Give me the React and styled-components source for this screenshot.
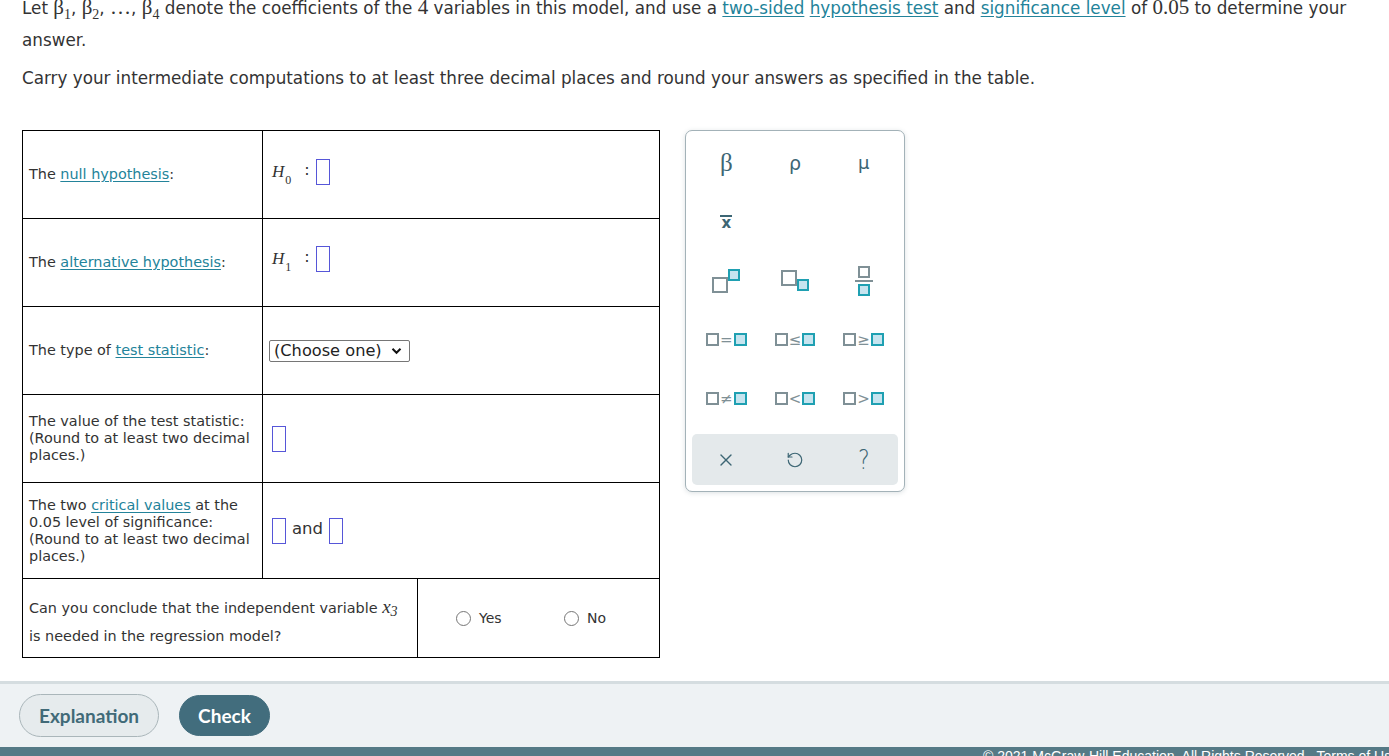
import React from 'react';
import styled, { createGlobalStyle } from 'styled-components';
import { X, RotateCcw } from 'lucide-react';

const Global = createGlobalStyle`
  html, body { margin: 0; padding: 0; background: #fff; overflow: hidden; }
  body { font-family: "DejaVu Sans", Verdana, sans-serif; color: #333; }
  * { box-sizing: border-box; }
`;

const Page = styled.div`
  width: 1389px;
  height: 756px;
  display: flex;
  flex-direction: column;
  overflow: hidden;
`;

const Main = styled.div`
  flex: 1;
  padding-left: 22px;
  overflow: hidden;
`;

const Para = styled.p`
  margin: ${(p) => p.$mt}px 0 0;
  font-size: 16.8px;
  line-height: 32px;
  color: #333;
  width: 1345px;
`;

const Link = styled.a`
  color: #23839a;
  text-decoration: underline;
  text-underline-offset: 2px;
  cursor: pointer;
`;

const MathText = styled.span`
  font-family: "Liberation Serif", "Times New Roman", serif;
  font-size: ${(p) => p.$size || 21}px;
  font-style: ${(p) => (p.$italic ? 'italic' : 'normal')};
  color: #333;
`;

const Sub = styled.sub`
  font-size: ${(p) => p.$size || 14}px;
  vertical-align: ${(p) => p.$drop || -5}px;
  line-height: 0;
`;

const Work = styled.div`
  display: flex;
  align-items: flex-start;
  gap: 25px;
  margin-top: 36px;
`;

const Table = styled.div`
  width: 638px;
  border: 1px solid #000;
  display: flex;
  flex-direction: column;
`;

const Row = styled.div`
  display: grid;
  grid-template-columns: ${(p) => p.$cols};
  height: ${(p) => p.$h}px;
  border-top: ${(p) => (p.$first ? 'none' : '1px solid #000')};
`;

const Label = styled.div`
  border-right: 1px solid #000;
  display: flex;
  align-items: center;
  padding: 0 6px;
  font-size: 14.4px;
  line-height: 17px;
  color: #333;
`;

const Question = styled.div`
  border-right: 1px solid #000;
  padding: 14px 6px 0;
  font-size: 14.4px;
  line-height: 28px;
  color: #333;
`;

const Answer = styled.div`
  display: flex;
  align-items: center;
  padding: 0 0 ${(p) => p.$pb || 0}px 9px;
  font-size: 16px;
  color: #333;
`;

const Blank = styled.span`
  display: inline-block;
  width: 14px;
  height: 26px;
  border: 1px solid #5656d8;
`;

const Hyp = styled.span`
  display: inline-flex;
  align-items: center;
  font-family: "Liberation Serif", serif;
  font-size: 17px;
`;

const HSub = styled.span`
  font-size: 12px;
  font-style: normal;
  position: relative;
  top: 9px;
  margin-left: 1px;
`;

const Colon = styled.span`
  font-family: "DejaVu Sans", sans-serif;
  font-size: 16px;
  margin: 0 6px 0 13px;
  position: relative;
  top: -2px;
`;

const Select = styled.div`
  display: inline-flex;
  align-items: center;
  gap: 9px;
  height: 22px;
  margin-left: -3px;
  padding: 0 7px 0 4px;
  border: 1px solid #767676;
  border-radius: 2px;
  font-size: 16.2px;
  color: #222;
  background: #fff;
`;

const AndText = styled.span`
  margin: 0 6px;
  font-size: 16.5px;
  position: relative;
  top: -2px;
`;

const Choices = styled.div`
  display: flex;
  align-items: center;
  padding-left: 38px;
  font-size: 14px;
  color: #333;
`;

const Choice = styled.label`
  display: inline-flex;
  align-items: center;
  gap: 8px;
  width: 108px;
`;

const Radio = styled.span`
  display: inline-block;
  width: 15px;
  height: 15px;
  border-radius: 50%;
  border: 1px solid #767676;
  background: #fff;
`;

const Keypad = styled.div`
  width: 220px;
  height: 362px;
  border: 1px solid #a3b2b8;
  border-radius: 7px;
  box-shadow: 0 1px 5px rgba(60, 90, 100, 0.18);
  padding: 2px 6px 6px;
  display: flex;
  flex-direction: column;
  background: #fff;
`;

const KeyGrid = styled.div`
  display: grid;
  grid-template-columns: repeat(3, 1fr);
  grid-auto-rows: 59px;
`;

const Key = styled.div`
  display: flex;
  align-items: center;
  justify-content: center;
  color: #3d6674;
  font-size: ${(p) => p.$size || 18}px;
  font-family: ${(p) => (p.$serif ? '"Liberation Serif", serif' : '"DejaVu Sans", sans-serif')};
`;

const XBar = styled.span`
  display: inline-block;
  border-top: 2px solid #3d6674;
  line-height: 13px;
  font-size: 15px;
  font-weight: bold;
  padding: 0 1px;
  margin-top: 2px;
`;

const Sq = styled.span`
  display: inline-block;
  width: ${(p) => p.$s}px;
  height: ${(p) => p.$s}px;
  border: 2px solid ${(p) => (p.$fill ? '#1fa0b2' : '#7f9096')};
  background: ${(p) => (p.$fill ? '#c6e4ef' : '#fff')};
  flex: none;
`;

const Stack = styled.span`
  display: inline-flex;
  align-items: ${(p) => p.$align || 'center'};
  flex-direction: ${(p) => p.$dir || 'row'};
`;

const Rel = styled.span`
  font-size: 15px;
  color: #7f9096;
  line-height: 12px;
  margin: 0 1px;
`;

const FracLine = styled.span`
  display: block;
  width: 18px;
  height: 2px;
  background: #7f9096;
  margin: 2px 0;
`;

const ToolBar = styled.div`
  margin-top: 6px;
  height: 51px;
  background: #e4e9eb;
  border-radius: 5px;
  display: grid;
  grid-template-columns: repeat(3, 1fr);
  align-items: center;
  justify-items: center;
  color: #3d6674;
`;

const Question2 = styled.span`
  font-size: 26px;
  font-family: "DejaVu Sans", sans-serif;
  font-weight: 200;
  color: #3d6674;
  transform: scaleX(0.85);
`;

const Bottom = styled.div`
  height: 66px;
  border-top: 3px solid #d5dde0;
  background: #eef2f4;
  display: flex;
  align-items: center;
  gap: 20px;
  padding: 0 0 0 19px;
  flex: none;
`;

const Btn = styled.button`
  font-family: Lato, "Open Sans", sans-serif;
  font-weight: 700;
  font-size: 19px;
  height: ${(p) => (p.$primary ? 41 : 43)}px;
  padding: 0 ${(p) => (p.$primary ? 18 : 19)}px;
  border-radius: 22px;
  border: 1px solid ${(p) => (p.$primary ? '#426d7d' : '#aab6ba')};
  background: ${(p) => (p.$primary ? '#426d7d' : '#e6ebed')};
  color: ${(p) => (p.$primary ? '#fff' : '#416a78')};
  cursor: pointer;
`;

const Footer = styled.div`
  height: 9px;
  flex: none;
  background: #557a86;
  display: flex;
  gap: 8px;
  padding: 1px 0 0 983px;
  overflow: hidden;
  color: #fff;
  font-family: "Liberation Sans", Arial, sans-serif;
  font-size: 14px;
  line-height: 16px;
  white-space: nowrap;
`;

function SuperKey() {
  return (
    <Stack $align="flex-start">
      <Sq $s={16} style={{ marginTop: 8 }} />
      <Sq $s={12} $fill />
    </Stack>
  );
}

function SubKey() {
  return (
    <Stack $align="flex-start">
      <Sq $s={16} />
      <Sq $s={12} $fill style={{ marginTop: 9 }} />
    </Stack>
  );
}

function FracKey() {
  return (
    <Stack $dir="column">
      <Sq $s={12} />
      <FracLine />
      <Sq $s={12} $fill />
    </Stack>
  );
}

function RelKey({ sym }) {
  return (
    <Stack>
      <Sq $s={13} />
      <Rel>{sym}</Rel>
      <Sq $s={13} $fill />
    </Stack>
  );
}

export default function App() {
  return (
    <Page>
      <Global />
      <Main>
        <Para $mt={-9}>
          Let <MathText>β<Sub>1</Sub></MathText>, <MathText>β<Sub>2</Sub></MathText>, <MathText>…</MathText>,{' '}
          <MathText>β<Sub>4</Sub></MathText> denote the coefficients of the <MathText>4</MathText> variables in this model, and use a{' '}
          <Link>two-sided</Link> <Link>hypothesis test</Link> and <Link>significance level</Link> of{' '}
          <MathText>0.05</MathText> to determine your answer.
        </Para>
        <Para $mt={6}>
          Carry your intermediate computations to at least three decimal places and round your answers as specified in the table.
        </Para>
        <Work>
          <Table>
            <Row $first $cols="240px 1fr" $h={87}>
              <Label>
                <span>The <Link>null hypothesis</Link>:</span>
              </Label>
              <Answer $pb={6}>
                <Hyp><i>H</i><HSub>0</HSub></Hyp>
                <Colon>:</Colon>
                <Blank />
              </Answer>
            </Row>
            <Row $cols="240px 1fr" $h={88}>
              <Label>
                <span>The <Link>alternative hypothesis</Link>:</span>
              </Label>
              <Answer $pb={8}>
                <Hyp><i>H</i><HSub>1</HSub></Hyp>
                <Colon>:</Colon>
                <Blank />
              </Answer>
            </Row>
            <Row $cols="240px 1fr" $h={88}>
              <Label>
                <span>The type of <Link>test statistic</Link>:</span>
              </Label>
              <Answer>
                <Select>
                  (Choose one)
                  <svg width="11" height="8" viewBox="0 0 11 8">
                    <path d="M1.5 1.8 L5.5 5.8 L9.5 1.8" fill="none" stroke="#111" strokeWidth="2" />
                  </svg>
                </Select>
              </Answer>
            </Row>
            <Row $cols="240px 1fr" $h={88}>
              <Label>
                <span>The value of the test statistic:<br />(Round to at least two decimal places.)</span>
              </Label>
              <Answer>
                <Blank />
              </Answer>
            </Row>
            <Row $cols="240px 1fr" $h={96}>
              <Label>
                <span>
                  The two <Link>critical values</Link> at the 0.05 level of significance:<br />(Round to at least two decimal places.)
                </span>
              </Label>
              <Answer>
                <Blank />
                <AndText>and</AndText>
                <Blank />
              </Answer>
            </Row>
            <Row $cols="395px 1fr" $h={79}>
              <Question>
                Can you conclude that the independent variable{' '}
                <MathText $italic $size={19}>x<Sub $size={14} $drop={-3}>3</Sub></MathText>
                <br />
                is needed in the regression model?
              </Question>
              <Choices>
                <Choice><Radio />Yes</Choice>
                <Choice><Radio />No</Choice>
              </Choices>
            </Row>
          </Table>
          <Keypad>
            <KeyGrid>
              <Key $serif $size={25}>β</Key>
              <Key $size={19}>ρ</Key>
              <Key $size={18}>μ</Key>
              <Key><XBar>x</XBar></Key>
              <Key />
              <Key />
              <Key><SuperKey /></Key>
              <Key><SubKey /></Key>
              <Key><FracKey /></Key>
              <Key><RelKey sym="=" /></Key>
              <Key><RelKey sym="≤" /></Key>
              <Key><RelKey sym="≥" /></Key>
              <Key><RelKey sym="≠" /></Key>
              <Key><RelKey sym="<" /></Key>
              <Key><RelKey sym=">" /></Key>
            </KeyGrid>
            <ToolBar>
              <X size={20} strokeWidth={1.6} />
              <RotateCcw size={18} strokeWidth={1.6} />
              <Question2>?</Question2>
            </ToolBar>
          </Keypad>
        </Work>
      </Main>
      <Bottom>
        <Btn>Explanation</Btn>
        <Btn $primary>Check</Btn>
      </Bottom>
      <Footer>
        <span>© 2021 McGraw-Hill Education. All Rights Reserved.</span>
        <span>Terms of Use</span>
      </Footer>
    </Page>
  );
}
